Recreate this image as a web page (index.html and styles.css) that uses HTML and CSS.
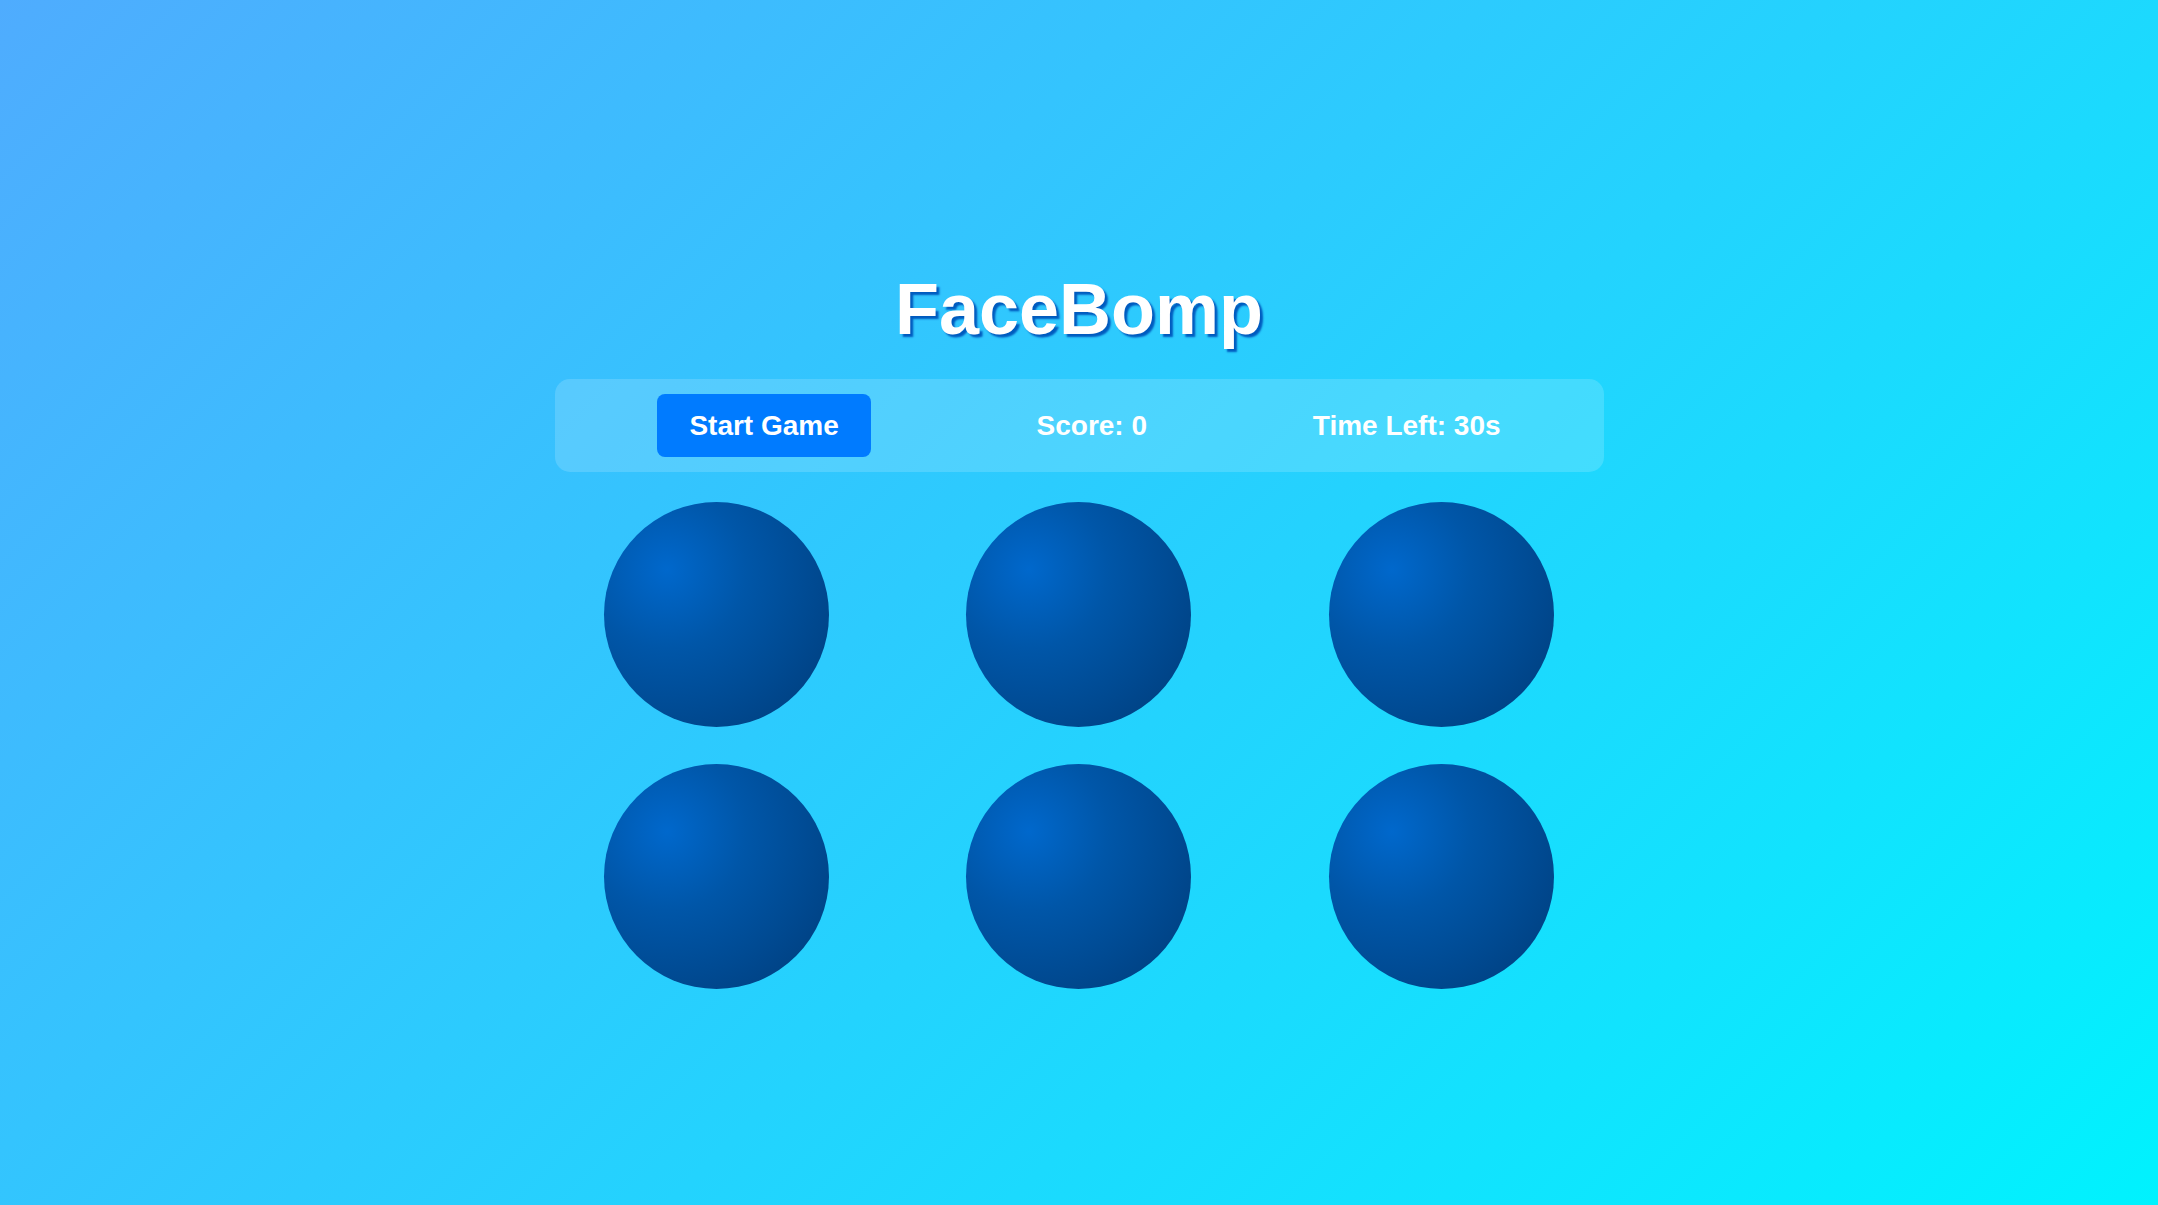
FILE: index.html
```html
<!DOCTYPE html>
<html lang="en">
<head>
<meta charset="utf-8">
<title>FaceBomp</title>
<link rel="stylesheet" href="styles.css">
</head>
<body>
<main class="game">
  <h1 class="title">FaceBomp</h1>
  <div class="panel">
    <button class="start-btn">Start Game</button>
    <div class="stat">Score: 0</div>
    <div class="stat">Time Left: 30s</div>
  </div>
  <div class="board">
    <div class="cell"><div class="hole"></div></div>
    <div class="cell"><div class="hole"></div></div>
    <div class="cell"><div class="hole"></div></div>
    <div class="cell"><div class="hole"></div></div>
    <div class="cell"><div class="hole"></div></div>
    <div class="cell"><div class="hole"></div></div>
  </div>
</main>
</body>
</html>
```

FILE: styles.css
```css
html, body {
  margin: 0;
  padding: 0;
  height: 100%;
}
body {
  background: linear-gradient(135deg, #4facfe 0%, #00f2fe 100%);
  font-family: "Liberation Sans", Arial, sans-serif;
  color: #fff;
}
.game {
  width: 1049px;
  margin: 0 auto;
  padding-top: 268px;
  display: flex;
  flex-direction: column;
  align-items: stretch;
}
.title {
  margin: 0 0 28px;
  font-size: 72px;
  font-weight: 700;
  line-height: 83px;
  text-align: center;
  color: #fff;
  text-shadow: 3px 3px 2px #005bbf;
}
.panel {
  display: flex;
  justify-content: space-around;
  align-items: center;
  padding: 15px 20px;
  height: 93px;
  box-sizing: border-box;
  background: rgba(255, 255, 255, 0.16);
  border-radius: 15px;
}
.start-btn {
  font-family: "Liberation Sans", Arial, sans-serif;
  font-size: 28px;
  font-weight: 700;
  color: #fff;
  background: #007bff;
  border: none;
  border-radius: 8px;
  padding: 0 32px;
  height: 63px;
  line-height: 63px;
  cursor: pointer;
}
.stat {
  font-size: 28px;
  font-weight: 700;
  color: #fff;
}
.board {
  margin-top: 30px;
  display: grid;
  grid-template-columns: repeat(3, 1fr);
  column-gap: 38px;
  row-gap: 37px;
}
.cell {
  display: flex;
  justify-content: center;
}
.hole {
  width: 225px;
  height: 225px;
  border-radius: 50%;
  background: radial-gradient(circle at 28% 30%, #0068cc 0%, #0056a8 35%, #004a92 65%, #003b78 100%);
}
```
